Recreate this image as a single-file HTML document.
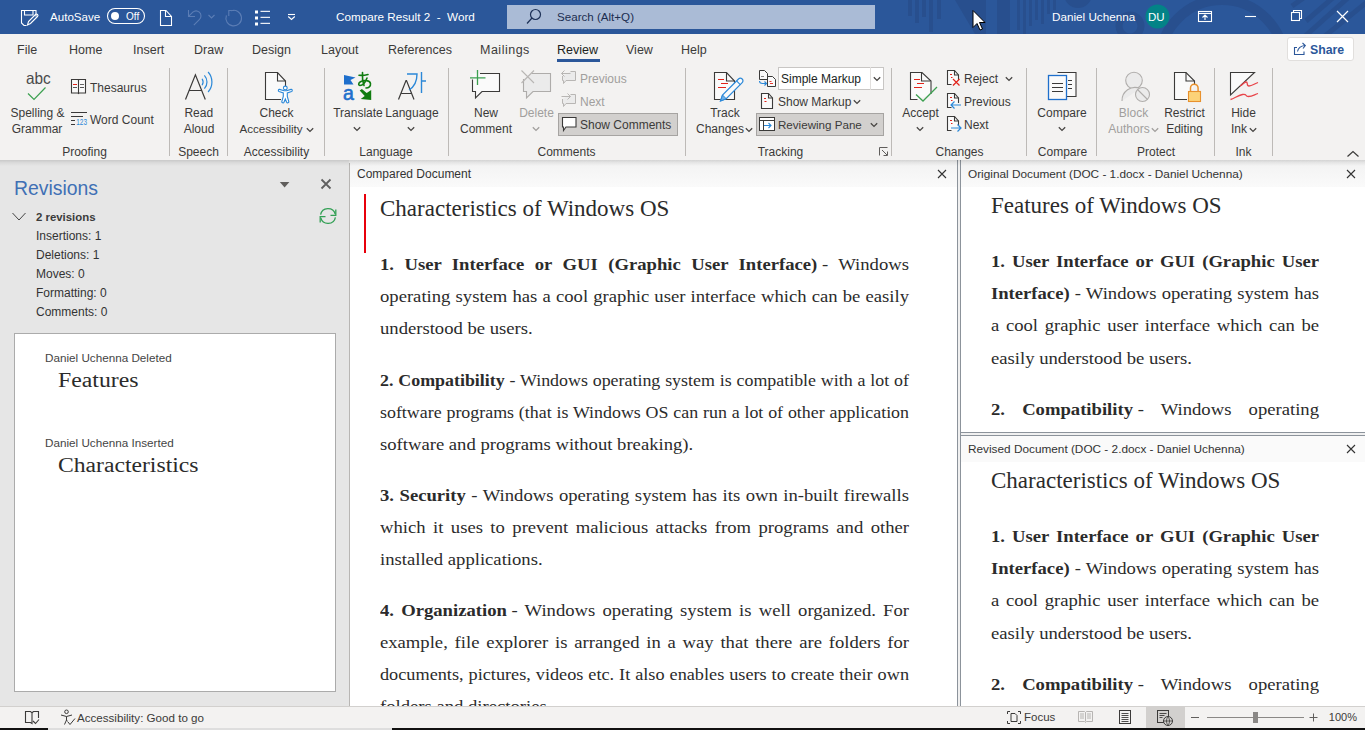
<!DOCTYPE html>
<html><head><meta charset="utf-8">
<style>
*{margin:0;padding:0;box-sizing:border-box}
html,body{width:1365px;height:730px;overflow:hidden;background:#f3f2f1;font-family:"Liberation Sans",sans-serif;color:#323130}
.a{position:absolute}
.t{position:absolute;white-space:nowrap;font-size:12px;line-height:14px}
#title{left:0;top:0;width:1365px;height:34px;background:#2b579a;overflow:hidden}
#title .t{color:#fff}
#tabs .t{font-size:12.5px;color:#3b3a39;top:43px}
.sep{position:absolute;width:1px;background:#c8c6c4;top:68px;height:88px}
.rb .t{color:#3b3a39}
.gl{position:absolute;white-space:nowrap;font-size:12px;line-height:14px;top:145px;color:#3b3a39}
.dis{color:#a19f9d !important}
#pane{left:0;top:161px;width:349px;height:545px;background:#e6e6e6}
.serif{font-family:"Liberation Serif",serif}
.doc{position:absolute;background:#fff;overflow:hidden}
.ln{position:absolute;white-space:nowrap;font-family:"Liberation Serif",serif;font-size:18px;line-height:20px;color:#2b2b2b;text-align:justify;text-align-last:justify}
.ln.l{text-align-last:left}
b{font-weight:bold}
</style>
</head><body>
<!-- TITLE BAR -->
<div id="title" class="a">
 <svg class="a" style="left:0;top:0" width="1365" height="34">
  <g fill="#284f8e">
   <rect x="908" y="0" width="4" height="16"/><rect x="915" y="0" width="4" height="23"/><rect x="922" y="0" width="4" height="17"/><rect x="929" y="0" width="4" height="32"/><rect x="937" y="0" width="4" height="19"/>
   <polygon points="955,0 986,0 978,34 975,34"/>
   <rect x="975" y="0" width="11" height="34"/>
   <rect x="997" y="0" width="13" height="34"/>
   <rect x="1017" y="0" width="3" height="30"/><rect x="1023" y="0" width="3" height="34"/><rect x="1029" y="0" width="3" height="26"/><rect x="1035" y="0" width="3" height="20"/><rect x="1041" y="0" width="3" height="24"/><rect x="1047" y="0" width="3" height="14"/><rect x="1053" y="0" width="3" height="10"/>
   <circle cx="1078" cy="-6" r="14"/>
  </g>
  <g fill="none" stroke="#284f8e">
   <circle cx="1130" cy="26" r="11" stroke-width="7"/>
   <circle cx="1222" cy="62" r="62" stroke-width="10"/>
  </g>
  <g stroke="#284f8e" stroke-width="5" stroke-linecap="butt">
   <path d="M1312 -8L1292 6"/><path d="M1335 -4L1306 21"/><path d="M1350 -4L1303 38"/><path d="M1372 -2L1320 40"/>
  </g>
  <!-- save icon -->
  <g fill="none" stroke="#fff" stroke-width="1.1">
   <path d="M26.5 25.5h-2.5l-2.5-2.5v-12.5h14.5v6"/>
   <path d="M24.5 10.5v4.5h8.5v-4.5"/>
   <path d="M27.5 25l1-3.5 7-7a1.3 1.3 0 0 1 2 2l-7 7z"/>
  </g>
  <!-- toggle -->
  <rect x="107.5" y="8.5" width="37" height="15" rx="7.5" fill="none" stroke="#fff" stroke-width="1.1"/>
  <circle cx="115" cy="16" r="4" fill="#fff"/>
  <!-- new doc icon -->
  <path d="M160.5 10.5h5.5l5.5 6v9h-11z M165.5 10.5v6h6" fill="none" stroke="#fff" stroke-width="1.1"/>
  <!-- undo (disabled) -->
  <g fill="none" stroke="#5b7db5" stroke-width="1.1">
   <path d="M188.5 10v6.5h6.5"/><path d="M188.8 16.2l4-4a5 5 0 0 1 6.5 0a5 5 0 0 1 0 7.5l-5.5 5.5"/>
   <path d="M208.5 15l3 3 3-3"/>
   <path d="M228.8 10v6M228.8 10.5h5.5"/><path d="M231 10.8a7.8 7.8 0 1 1 -4.6 4.6"/>
  </g>
  <!-- list -->
  <g fill="#fff"><rect x="255" y="10.5" width="3" height="3"/><rect x="255" y="16.5" width="3" height="3"/><rect x="255" y="22.5" width="3" height="3"/>
   <rect x="260.5" y="10.8" width="9.5" height="1.1"/><rect x="260.5" y="16.8" width="9.5" height="1.1"/><rect x="260.5" y="22.8" width="9.5" height="1.1"/></g>
  <g fill="none" stroke="#fff" stroke-width="1.1"><path d="M288 14.5h7"/><path d="M288.2 16.5l3.3 3 3.3-3"/></g>
  <!-- search box -->
  <rect x="507" y="5" width="368" height="24" fill="#aabbd6"/>
  <g fill="none" stroke="#1d3157" stroke-width="1.2"><circle cx="535.5" cy="14.5" r="5"/><path d="M532 18l-5 5.5"/></g>
  <!-- avatar -->
  <circle cx="1157.5" cy="16.5" r="12" fill="#038387"/>
  <!-- ribbon display -->
  <g fill="none" stroke="#fff" stroke-width="1.1"><rect x="1198.5" y="11.5" width="13" height="10"/><path d="M1198.5 13.5h13"/><path d="M1205 20v-5m-2.5 2.5l2.5-2.5 2.5 2.5"/></g>
  <path d="M1245 16.5h11" stroke="#fff" stroke-width="1.1"/>
  <g fill="none" stroke="#fff" stroke-width="1.1"><rect x="1291.5" y="12.5" width="8" height="8"/><path d="M1293.5 12.5v-2h8v8h-2"/></g>
  <path d="M1337 11l11 11M1348 11l-11 11" stroke="#fff" stroke-width="1.2"/>
  <!-- cursor -->
  <path d="M973 10.5v17l4-4 3 6.5 2.5-1-3-6.5h5.5z" fill="#fff" stroke="#000" stroke-width="1"/>
 </svg>
 <div class="t" style="left:50px;top:10px;font-size:11.6px">AutoSave</div>
 <div class="t" style="left:126px;top:10.5px;font-size:10px;line-height:12px">Off</div>
 <div class="t" style="left:336px;top:10px;font-size:11.7px">Compare Result 2&nbsp; -&nbsp; Word</div>
 <div class="t" style="left:557px;top:10px;font-size:11.6px;color:#1b2d50">Search (Alt+Q)</div>
 <div class="t" style="left:1052px;top:10px;font-size:11.7px">Daniel Uchenna</div>
 <div class="t" style="left:1148px;top:10px;font-size:11.5px">DU</div>
</div>


<!-- TABS -->
<div id="tabs">
 <div class="t" style="left:17px">File</div>
 <div class="t" style="left:69px">Home</div>
 <div class="t" style="left:133px">Insert</div>
 <div class="t" style="left:194px">Draw</div>
 <div class="t" style="left:252px">Design</div>
 <div class="t" style="left:321px">Layout</div>
 <div class="t" style="left:388px">References</div>
 <div class="t" style="left:480px;letter-spacing:0.5px">Mailings</div>
 <div class="t" style="left:557px;color:#201f1e">Review</div>
 <div class="a" style="left:557px;top:59px;width:43px;height:3px;background:#2b579a"></div>
 <div class="t" style="left:626px">View</div>
 <div class="t" style="left:681px">Help</div>
 <div class="a" style="left:1287px;top:37px;width:67px;height:24px;background:#fff;border:1px solid #e1dfdd;border-radius:3px"></div>
 <svg class="a" style="left:1293px;top:41px" width="16" height="16"><g fill="none" stroke="#2b579a" stroke-width="1.1"><path d="M4 6.5h-2.5v7h9.5v-3"/><path d="M4.5 10.5c0.5-3 3-5.5 7.5-6"/><path d="M9.5 2l2.8 2.5-2.3 3"/></g></svg>
 <div class="t" style="left:1310px;top:43px;color:#2b579a;font-size:12.3px;font-weight:bold">Share</div>
</div>


<!-- RIBBON -->
<div class="a" style="left:169px;top:68px;width:1px;height:88px;background:#bdbab7"></div>
<div class="a" style="left:227px;top:68px;width:1px;height:88px;background:#bdbab7"></div>
<div class="a" style="left:324px;top:68px;width:1px;height:88px;background:#bdbab7"></div>
<div class="a" style="left:448px;top:68px;width:1px;height:88px;background:#bdbab7"></div>
<div class="a" style="left:685px;top:68px;width:1px;height:88px;background:#bdbab7"></div>
<div class="a" style="left:891px;top:68px;width:1px;height:88px;background:#bdbab7"></div>
<div class="a" style="left:1026px;top:68px;width:1px;height:88px;background:#bdbab7"></div>
<div class="a" style="left:1096px;top:68px;width:1px;height:88px;background:#bdbab7"></div>
<div class="a" style="left:1214px;top:68px;width:1px;height:88px;background:#bdbab7"></div>
<div class="a" style="left:1272px;top:68px;width:1px;height:88px;background:#bdbab7"></div>
<div class="t" style="top:70.03px;font-size:16.5px;line-height:16.5px;color:#4a4a4a;left:26px;transform:scaleX(0.93);transform-origin:left">abc</div>
<svg class="a" style="left:26px;top:86px" width="22" height="16" viewBox="0 0 22 16"><path d="M2 7.5l6 6 11.5-12" fill="none" stroke="#3ca050" stroke-width="1.2"/></svg>
<div class="t" style="top:106.84px;font-size:12px;line-height:12px;color:#3b3a39;left:-112.5px;width:300px;text-align:center;">Spelling &amp;</div>
<div class="t" style="top:122.84px;font-size:12px;line-height:12px;color:#3b3a39;left:-113px;width:300px;text-align:center;">Grammar</div>
<svg class="a" style="left:70px;top:78px" width="18" height="17" viewBox="0 0 18 17"><path d="M1.5 1.5h6.5l0.5 0.5 0.5-0.5h6.5v13.5h-6.5l-0.5 0.5-0.5-0.5h-6.5z" fill="#fafafa" stroke="#3b3a39" stroke-width="1.1"/><path d="M8.5 2v13.5" stroke="#3b3a39" stroke-width="1.1"/><path d="M3 6.5h4" stroke="#e2231a" stroke-width="1"/><path d="M10 6.5h4" stroke="#666" stroke-width="1"/><path d="M3 9.5h4M10 9.5h4" stroke="#555" stroke-width="1"/></svg>
<div class="t" style="top:81.84px;font-size:12px;line-height:12px;color:#3b3a39;left:90px;">Thesaurus</div>
<svg class="a" style="left:70px;top:110px" width="18" height="16" viewBox="0 0 18 16"><path d="M1 2.5h16M1 6.5h12M1 10.5h4M1 14.5h4" stroke="#3b3a39" stroke-width="1.1"/><text x="6.3" y="15" font-size="8.8" fill="#2b88d8" font-family="Liberation Sans" textLength="10.7" lengthAdjust="spacingAndGlyphs">123</text></svg>
<div class="t" style="top:113.84px;font-size:12px;line-height:12px;color:#3b3a39;left:90px;">Word Count</div>
<div class="t" style="top:145.84px;font-size:12px;line-height:12px;color:#3b3a39;left:-65.5px;width:300px;text-align:center;">Proofing</div>
<svg class="a" style="left:184px;top:70px" width="32" height="32" viewBox="0 0 32 32"><path d="M1.5 29.5L11.4 4.8L21.3 29.5M5.3 20.5h12.3" fill="none" stroke="#3b3a39" stroke-width="1.2"/><g fill="none" stroke="#2b88d8" stroke-width="1.2"><path d="M18.1 8.8a6 6 0 0 1 0 6.4"/><path d="M20.4 5.3a10 10 0 0 1 0 13.4"/><path d="M24.1 2a15 15 0 0 1 0 20"/></g></svg>
<div class="t" style="top:106.84px;font-size:12px;line-height:12px;color:#3b3a39;left:48.80000000000001px;width:300px;text-align:center;">Read</div>
<div class="t" style="top:122.84px;font-size:12px;line-height:12px;color:#3b3a39;left:49px;width:300px;text-align:center;">Aloud</div>
<div class="t" style="top:145.84px;font-size:12px;line-height:12px;color:#3b3a39;left:48.5px;width:300px;text-align:center;">Speech</div>
<svg class="a" style="left:262px;top:70px" width="34" height="34" viewBox="0 0 34 34"><path d="M19 29.5h-15.5v-27h12l8 8.5v5" fill="#fafafa" stroke="#3b3a39" stroke-width="1.1"/><path d="M15.5 2.5v8.5h8" fill="none" stroke="#3b3a39" stroke-width="1.1"/><circle cx="23.3" cy="18" r="1.9" fill="#fff" stroke="#2b88d8" stroke-width="1.1"/><path d="M17 21.5l4.3 1.5v3.5l-1.5 5a1.2 1.2 0 0 0 2.2 0.8l1.3-3.3 1.3 3.3a1.2 1.2 0 0 0 2.2-0.8l-1.5-5v-3.5l4.3-1.5a1.1 1.1 0 0 0-0.6-2.1l-4.4 1.4h-2.6l-4.4-1.4a1.1 1.1 0 0 0-0.6 2.1z" fill="#fff" stroke="#2b88d8" stroke-width="1.1"/></svg>
<div class="t" style="top:106.84px;font-size:12px;line-height:12px;color:#3b3a39;left:126.5px;width:300px;text-align:center;">Check</div>
<div class="t" style="top:123.18px;font-size:11.6px;line-height:11.6px;color:#3b3a39;left:121px;width:300px;text-align:center;">Accessibility</div>
<svg class="a" style="left:306px;top:127px" width="8" height="6" viewBox="0 0 8 6"><path d="M0.8 1.2l3.2 3.2 3.2-3.2" fill="none" stroke="#484644" stroke-width="1.3"/></svg>
<div class="t" style="top:145.84px;font-size:12px;line-height:12px;color:#3b3a39;left:126.5px;width:300px;text-align:center;">Accessibility</div>
<svg class="a" style="left:338px;top:66px" width="36" height="38" viewBox="0 0 36 38"><path d="M6 9l11.5 2.5-5 2.5 3 4.6h-9.5z" fill="#1e6fcc"/><text x="5" y="34" font-size="19.5" fill="#1e6fcc" font-family="Liberation Sans" stroke="#1e6fcc" stroke-width="0.6">a</text><g transform="translate(19.5,5.5)" fill="none" stroke="#107c10" stroke-width="1.6" stroke-linecap="round"><path d="M1.5 3.8c3 0.3 6 0 9-0.8"/><path d="M5 1c-0.3 4 0 9 1.5 13"/><path d="M9.5 6.5c-1.5 4-4.5 7.5-7 7.5c-1.8 0-1.8-2.6 0.5-3.8c3.8-2 9.5-1.5 10 2c0.4 2.8-2 4-4.5 4.3"/></g><path d="M33.2 24v10l-10.5-1 4-3-5-5.5 2.2-1.5 4.8 4z" fill="#107c10"/></svg>
<div class="t" style="top:106.84px;font-size:12px;line-height:12px;color:#3b3a39;left:208px;width:300px;text-align:center;">Translate</div>
<svg class="a" style="left:353px;top:126px" width="8" height="6" viewBox="0 0 8 6"><path d="M0.8 1.2l3.2 3.2 3.2-3.2" fill="none" stroke="#484644" stroke-width="1.3"/></svg>
<svg class="a" style="left:395px;top:66px" width="34" height="36" viewBox="0 0 34 36"><path d="M3.5 33.5l7.5-19h0.5l7.5 19M6.5 27.5h10" fill="none" stroke="#3b3a39" stroke-width="1.2"/><g fill="none" stroke="#2b88d8" stroke-width="1.4"><path d="M12 8h10c0 8-3 13-8 16"/><path d="M26.5 6v21M26.5 15h4.5"/></g></svg>
<div class="t" style="top:106.84px;font-size:12px;line-height:12px;color:#3b3a39;left:262px;width:300px;text-align:center;">Language</div>
<svg class="a" style="left:407px;top:126px" width="8" height="6" viewBox="0 0 8 6"><path d="M0.8 1.2l3.2 3.2 3.2-3.2" fill="none" stroke="#484644" stroke-width="1.3"/></svg>
<div class="t" style="top:145.84px;font-size:12px;line-height:12px;color:#3b3a39;left:236px;width:300px;text-align:center;">Language</div>
<svg class="a" style="left:466px;top:68px" width="36" height="34" viewBox="0 0 36 34"><path d="M6.5 5.5h27v18h-17.5l-6.5 6.5v-6.5h-3z" fill="#fafafa"/><path d="M14 5.5h19.5v18h-17.5l-6.5 6.5v-6.5h-3v-12" fill="none" stroke="#3b3a39" stroke-width="1.1"/><path d="M11.5 2v15M4 9.8h15.5" stroke="#3ca050" stroke-width="1.3"/></svg>
<div class="t" style="top:106.84px;font-size:12px;line-height:12px;color:#3b3a39;left:336px;width:300px;text-align:center;">New</div>
<div class="t" style="top:122.84px;font-size:12px;line-height:12px;color:#3b3a39;left:336px;width:300px;text-align:center;">Comment</div>
<svg class="a" style="left:518px;top:68px" width="36" height="34" viewBox="0 0 36 34"><path d="M5.5 11v12.5h3v6.5l6.5-6.5h17.5v-18h-19" fill="#ebebeb" stroke="#aeacaa" stroke-width="1.1"/><path d="M3.5 2.5l12.5 12.5M16 2.5l-12.5 12.5" stroke="#b8b6b4" stroke-width="1.1"/></svg>
<div class="t" style="top:106.84px;font-size:12px;line-height:12px;color:#a19f9d;left:386.5px;width:300px;text-align:center;">Delete</div>
<svg class="a" style="left:532px;top:126px" width="8" height="6" viewBox="0 0 8 6"><path d="M0.8 1.2l3.2 3.2 3.2-3.2" fill="none" stroke="#a19f9d" stroke-width="1.3"/></svg>
<svg class="a" style="left:560px;top:68px" width="18" height="18" viewBox="0 0 18 18"><path d="M10.5 3.5h5v9h-9.5l-2.5 3v-3h-1v-4.5" fill="#ebebeb" stroke="#b8b6b4" stroke-width="1"/><path d="M1.5 5.5h9M4.5 2.5l-3 3 3 3" fill="none" stroke="#b8b6b4" stroke-width="1"/></svg>
<div class="t" style="top:72.84px;font-size:12px;line-height:12px;color:#a19f9d;left:580px;">Previous</div>
<svg class="a" style="left:560px;top:91px" width="18" height="18" viewBox="0 0 18 18"><path d="M10.5 3.5h5v9h-9.5l-2.5 3v-3h-1v-4.5" fill="#ebebeb" stroke="#b8b6b4" stroke-width="1"/><path d="M1.5 5.5h9M7.5 2.5l3 3-3 3" fill="none" stroke="#b8b6b4" stroke-width="1"/></svg>
<div class="t" style="top:95.84px;font-size:12px;line-height:12px;color:#a19f9d;left:580px;">Next</div>
<div class="a" style="left:558px;top:113px;width:120px;height:23px;background:#d2d0ce;border:1px solid #a6a4a2"></div>
<svg class="a" style="left:560px;top:115px" width="18" height="18" viewBox="0 0 18 18"><path d="M2.5 2.5h13.5v9.5h-10l-2.5 3.5v-3.5h-1z" fill="#fff" stroke="#3b3a39" stroke-width="1.1"/></svg>
<div class="t" style="top:118.84px;font-size:12px;line-height:12px;color:#3b3a39;left:580px;">Show Comments</div>
<div class="t" style="top:145.84px;font-size:12px;line-height:12px;color:#3b3a39;left:416.5px;width:300px;text-align:center;">Comments</div>
<svg class="a" style="left:710px;top:68px" width="36" height="36" viewBox="0 0 36 36"><path d="M4.5 4.5h12l8 8.5v18.5h-20z" fill="#fafafa" stroke="#3b3a39" stroke-width="1.1"/><path d="M16.5 4.5v8.5h8" fill="none" stroke="#3b3a39" stroke-width="1.1"/><path d="M8 11.5h6M11 15.5h7M8 19.5h8" stroke="#e2231a" stroke-width="1.1"/><path d="M10.5 33l2-6 16-16a2.6 2.6 0 0 1 3.7 3.7l-16 16z" fill="#fafafa" stroke="#2b88d8" stroke-width="1.2"/><path d="M10.5 33l2-6 3.7 3.7z" fill="#6fb0e8" stroke="#2b88d8" stroke-width="1"/><path d="M26.8 13.2l3.7 3.7" stroke="#2b88d8" stroke-width="1.1"/></svg>
<div class="t" style="top:106.84px;font-size:12px;line-height:12px;color:#3b3a39;left:575px;width:300px;text-align:center;">Track</div>
<div class="t" style="top:122.84px;font-size:12px;line-height:12px;color:#3b3a39;left:570px;width:300px;text-align:center;">Changes</div>
<svg class="a" style="left:745px;top:127px" width="8" height="6" viewBox="0 0 8 6"><path d="M0.8 1.2l3.2 3.2 3.2-3.2" fill="none" stroke="#484644" stroke-width="1.3"/></svg>
<svg class="a" style="left:757px;top:68px" width="20" height="20" viewBox="0 0 20 20"><path d="M2.5 2.5h5l3 3v6h-8z" fill="#fafafa" stroke="#3b3a39" stroke-width="1"/><path d="M4 8.5h3" stroke="#777" stroke-width="0.9"/><path d="M10.5 8.5h5l3 3v7h-8z" fill="#fafafa" stroke="#3b3a39" stroke-width="1"/><path d="M12.5 13.5h2M13 15.5h3" stroke="#e2231a" stroke-width="0.9"/><path d="M2.5 13c0 2 1 2.5 3 2.5h4M7.5 13.5l2 2-2 2" fill="none" stroke="#2b88d8" stroke-width="1.1"/></svg>
<div class="a" style="left:778px;top:67px;width:106px;height:23px;background:#fff;border:1px solid #c8c6c4"></div>
<div class="a" style="left:870px;top:67px;width:1px;height:23px;background:#e1dfdd"></div>
<div class="t" style="top:72.84px;font-size:12px;line-height:12px;color:#201f1e;left:781px;">Simple Markup</div>
<svg class="a" style="left:873px;top:76px" width="8" height="6" viewBox="0 0 8 6"><path d="M0.8 1.2l3.2 3.2 3.2-3.2" fill="none" stroke="#484644" stroke-width="1.3"/></svg>
<svg class="a" style="left:758px;top:91px" width="18" height="20" viewBox="0 0 18 20"><path d="M3.5 2.5h7l4 4.5v10.5h-11z" fill="#fafafa" stroke="#3b3a39" stroke-width="1.1"/><path d="M10.5 2.5v4.5h4" fill="none" stroke="#3b3a39" stroke-width="1.1"/><path d="M6 7.5h2M6.5 10.5h2" stroke="#e2231a" stroke-width="1"/></svg>
<div class="t" style="top:95.84px;font-size:12px;line-height:12px;color:#3b3a39;left:778px;">Show Markup</div>
<svg class="a" style="left:853px;top:99px" width="8" height="6" viewBox="0 0 8 6"><path d="M0.8 1.2l3.2 3.2 3.2-3.2" fill="none" stroke="#484644" stroke-width="1.3"/></svg>
<div class="a" style="left:756px;top:113px;width:128px;height:23px;background:#d2d0ce;border:1px solid #a6a4a2"></div>
<svg class="a" style="left:758px;top:115px" width="18" height="18" viewBox="0 0 18 18"><rect x="1.5" y="2.5" width="15" height="13" fill="#fff" stroke="#3b3a39" stroke-width="1"/><path d="M1.5 5.5h15M5.5 5.5v10" stroke="#3b3a39" stroke-width="1"/><path d="M6 10.5h7M10.5 8l2.5 2.5-2.5 2.5" fill="none" stroke="#2b88d8" stroke-width="1.1"/></svg>
<div class="t" style="top:119.18px;font-size:11.6px;line-height:11.6px;color:#3b3a39;left:778px;">Reviewing Pane</div>
<svg class="a" style="left:870px;top:122px" width="8" height="6" viewBox="0 0 8 6"><path d="M0.8 1.2l3.2 3.2 3.2-3.2" fill="none" stroke="#484644" stroke-width="1.3"/></svg>
<div class="t" style="top:145.84px;font-size:12px;line-height:12px;color:#3b3a39;left:630.5px;width:300px;text-align:center;">Tracking</div>
<svg class="a" style="left:879px;top:147px" width="10" height="10" viewBox="0 0 10 10"><path d="M0.5 8.5v-8h8" fill="none" stroke="#605e5c" stroke-width="1"/><path d="M3 3l5 5M8.5 4.5v4h-4" fill="none" stroke="#605e5c" stroke-width="1"/></svg>
<svg class="a" style="left:906px;top:68px" width="36" height="36" viewBox="0 0 36 36"><path d="M11.5 31.5h-7v-27h11.5l9 8.5v13" fill="#fafafa" stroke="#3b3a39" stroke-width="1.1"/><path d="M15.5 4.5v8.5h9" fill="none" stroke="#3b3a39" stroke-width="1.1"/><path d="M8 11.5h6M11 15.5h7M8 19.5h8" stroke="#e2231a" stroke-width="1.1"/><path d="M10 26.5l7 6.5 14-14" fill="none" stroke="#3ca050" stroke-width="1.3"/></svg>
<div class="t" style="top:106.84px;font-size:12px;line-height:12px;color:#3b3a39;left:770.5px;width:300px;text-align:center;">Accept</div>
<svg class="a" style="left:916px;top:126px" width="8" height="6" viewBox="0 0 8 6"><path d="M0.8 1.2l3.2 3.2 3.2-3.2" fill="none" stroke="#484644" stroke-width="1.3"/></svg>
<svg class="a" style="left:945px;top:69px" width="18" height="18" viewBox="0 0 18 18"><path d="M6.5 15.5h-4v-14h7l4 4.5v5" fill="#fafafa" stroke="#3b3a39" stroke-width="1.1"/><path d="M9.5 1.5v4.5h4" fill="none" stroke="#3b3a39" stroke-width="1.1"/><path d="M5 5.5h2M6 8.5h1.5" stroke="#e2231a" stroke-width="1"/><path d="M8 10l6.5 6.5M14.5 10l-6.5 6.5" stroke="#e2231a" stroke-width="1.2"/></svg>
<div class="t" style="top:72.84px;font-size:12px;line-height:12px;color:#3b3a39;left:964px;">Reject</div>
<svg class="a" style="left:1005px;top:76px" width="8" height="6" viewBox="0 0 8 6"><path d="M0.8 1.2l3.2 3.2 3.2-3.2" fill="none" stroke="#484644" stroke-width="1.3"/></svg>
<svg class="a" style="left:945px;top:92px" width="18" height="18" viewBox="0 0 18 18"><path d="M6.5 15.5h-4v-14h7l4 4.5v5" fill="#fafafa" stroke="#3b3a39" stroke-width="1.1"/><path d="M9.5 1.5v4.5h4" fill="none" stroke="#3b3a39" stroke-width="1.1"/><path d="M5 5.5h2M6 8.5h1.5" stroke="#e2231a" stroke-width="1"/><path d="M6 13h10M9.5 9.5l-3.5 3.5 3.5 3.5" fill="none" stroke="#2b88d8" stroke-width="1.2"/></svg>
<div class="t" style="top:95.84px;font-size:12px;line-height:12px;color:#3b3a39;left:964px;">Previous</div>
<svg class="a" style="left:945px;top:115px" width="18" height="18" viewBox="0 0 18 18"><path d="M6.5 15.5h-4v-14h7l4 4.5v5" fill="#fafafa" stroke="#3b3a39" stroke-width="1.1"/><path d="M9.5 1.5v4.5h4" fill="none" stroke="#3b3a39" stroke-width="1.1"/><path d="M5 5.5h2M6 8.5h1.5" stroke="#e2231a" stroke-width="1"/><path d="M6 13h10M12.5 9.5l3.5 3.5-3.5 3.5" fill="none" stroke="#2b88d8" stroke-width="1.2"/></svg>
<div class="t" style="top:118.84px;font-size:12px;line-height:12px;color:#3b3a39;left:964px;">Next</div>
<div class="t" style="top:145.84px;font-size:12px;line-height:12px;color:#3b3a39;left:809.5px;width:300px;text-align:center;">Changes</div>
<svg class="a" style="left:1046px;top:70px" width="32" height="32" viewBox="0 0 32 32"><path d="M11.5 2.5h18.5v24h-12" fill="#fafafa" stroke="#3b3a39" stroke-width="1.1"/><path d="M22 10.5h4M22 14.5h4M22 18.5h4" stroke="#3b3a39" stroke-width="1"/><rect x="2.5" y="5.5" width="18" height="24" fill="#fafafa" stroke="#1e6fcc" stroke-width="1.3"/><path d="M6 13.5h11M6 17.5h11M6 21.5h11" stroke="#3b3a39" stroke-width="1"/></svg>
<div class="t" style="top:106.84px;font-size:12px;line-height:12px;color:#3b3a39;left:912px;width:300px;text-align:center;">Compare</div>
<svg class="a" style="left:1058px;top:126px" width="8" height="6" viewBox="0 0 8 6"><path d="M0.8 1.2l3.2 3.2 3.2-3.2" fill="none" stroke="#484644" stroke-width="1.3"/></svg>
<div class="t" style="top:145.84px;font-size:12px;line-height:12px;color:#3b3a39;left:912.5px;width:300px;text-align:center;">Compare</div>
<svg class="a" style="left:1118px;top:70px" width="34" height="34" viewBox="0 0 34 34"><g fill="#ebebeb" stroke="#b0aeac" stroke-width="1.1"><circle cx="16" cy="10.5" r="8.3"/><path d="M4 31a13 13 0 0 1 18-12.5"/><circle cx="24.5" cy="24.5" r="7"/><path d="M19.5 19.5l10 10"/></g></svg>
<div class="t" style="top:106.84px;font-size:12px;line-height:12px;color:#a19f9d;left:983.5px;width:300px;text-align:center;">Block</div>
<div class="t" style="top:122.84px;font-size:12px;line-height:12px;color:#a19f9d;left:979px;width:300px;text-align:center;">Authors</div>
<svg class="a" style="left:1151px;top:127px" width="8" height="6" viewBox="0 0 8 6"><path d="M0.8 1.2l3.2 3.2 3.2-3.2" fill="none" stroke="#a19f9d" stroke-width="1.3"/></svg>
<svg class="a" style="left:1171px;top:70px" width="34" height="34" viewBox="0 0 34 34"><path d="M16 29.5h-12.5v-27h11.5l8.5 8.5v3" fill="#fafafa" stroke="#3b3a39" stroke-width="1.1"/><path d="M15 2.5v8.5h8.5" fill="none" stroke="#3b3a39" stroke-width="1.1"/><path d="M19.5 21.5v-3.5a3.8 3.8 0 0 1 7.6 0v3.5" fill="none" stroke="#e8912d" stroke-width="1.5"/><rect x="17.5" y="21.5" width="12" height="10" fill="#fcd278" stroke="#e8912d" stroke-width="1.1"/></svg>
<div class="t" style="top:106.84px;font-size:12px;line-height:12px;color:#3b3a39;left:1034.5px;width:300px;text-align:center;">Restrict</div>
<div class="t" style="top:122.84px;font-size:12px;line-height:12px;color:#3b3a39;left:1034.5px;width:300px;text-align:center;">Editing</div>
<div class="t" style="top:145.84px;font-size:12px;line-height:12px;color:#3b3a39;left:1006px;width:300px;text-align:center;">Protect</div>
<svg class="a" style="left:1228px;top:70px" width="32" height="32" viewBox="0 0 32 32"><path d="M2.5 2.5h24l-24 22.5z" fill="#fafafa" stroke="#3b3a39" stroke-width="1.1"/><path d="M12 16c3-1 3.5-4 6-4s0 4 3 4 5-2 9-3.5M2.5 29.5c4-1 7-4 12-5s2 2 6 2 6-2 9.5-3" fill="none" stroke="#e8454a" stroke-width="1.3"/></svg>
<div class="t" style="top:106.84px;font-size:12px;line-height:12px;color:#3b3a39;left:1093.5px;width:300px;text-align:center;">Hide</div>
<div class="t" style="top:122.84px;font-size:12px;line-height:12px;color:#3b3a39;left:1089px;width:300px;text-align:center;">Ink</div>
<svg class="a" style="left:1249px;top:127px" width="8" height="6" viewBox="0 0 8 6"><path d="M0.8 1.2l3.2 3.2 3.2-3.2" fill="none" stroke="#484644" stroke-width="1.3"/></svg>
<div class="t" style="top:145.84px;font-size:12px;line-height:12px;color:#3b3a39;left:1093.5px;width:300px;text-align:center;">Ink</div>
<svg class="a" style="left:1346px;top:149px" width="14" height="10" viewBox="0 0 14 10"><path d="M1.5 7.5l5.5-5 5.5 5" fill="none" stroke="#3b3a39" stroke-width="1.2"/></svg>
<div class="a" style="left:0px;top:160px;width:349px;height:546px;background:#e6e6e6"></div>
<div class="a" style="left:349px;top:163px;width:1px;height:543px;background:#b8b6b4"></div>
<div class="t" style="top:178.58px;font-size:19.4px;line-height:19.4px;color:#4070b5;left:14px;">Revisions</div>
<svg class="a" style="left:279px;top:181px" width="12" height="8" viewBox="0 0 12 8"><path d="M0.8 1h9.6l-4.8 5.5z" fill="#605e5c"/></svg>
<svg class="a" style="left:319px;top:177px" width="14" height="14" viewBox="0 0 14 14"><path d="M2.5 2.5l9 9M11.5 2.5l-9 9" stroke="#5f5f5f" stroke-width="1.8"/></svg>
<svg class="a" style="left:11px;top:211px" width="16" height="12" viewBox="0 0 16 12"><path d="M1.5 2l6.5 7 6.5-7" fill="none" stroke="#444" stroke-width="1"/></svg>
<div class="t" style="top:211.65px;font-size:11.4px;line-height:11.4px;color:#3b3b3b;font-weight:bold;left:36px;">2 revisions</div>
<svg class="a" style="left:318px;top:206px" width="20" height="20" viewBox="0 0 20 20"><g fill="none" stroke="#33a055" stroke-width="1.3"><path d="M2.6 8.7a7.5 7.5 0 0 1 14.6-0.6"/><path d="M17.4 11.3a7.5 7.5 0 0 1-14.6 0.6"/><path d="M17.8 3.5v5.8h-5.3"/><path d="M2.2 16.5v-5.8h5.3"/></g></svg>
<div class="t" style="top:229.84px;font-size:12px;line-height:12px;color:#333;left:36px;">Insertions: 1</div>
<div class="t" style="top:248.84px;font-size:12px;line-height:12px;color:#333;left:36px;">Deletions: 1</div>
<div class="t" style="top:267.84px;font-size:12px;line-height:12px;color:#333;left:36px;">Moves: 0</div>
<div class="t" style="top:286.84px;font-size:12px;line-height:12px;color:#333;left:36px;">Formatting: 0</div>
<div class="t" style="top:305.84px;font-size:12px;line-height:12px;color:#333;left:36px;">Comments: 0</div>
<div class="a" style="left:14px;top:333px;width:322px;height:359px;background:#fff;border:1px solid #ababab"></div>
<div class="t" style="top:352.10px;font-size:11.7px;line-height:11.7px;color:#444;left:45px;">Daniel Uchenna Deleted</div>
<div class="t" style="top:370.16px;font-size:21.3px;line-height:21.3px;color:#2b2b2b;font-family:'Liberation Serif',serif;left:57.5px;transform:scaleX(1.115);transform-origin:0 0">Features</div>
<div class="t" style="top:437.10px;font-size:11.7px;line-height:11.7px;color:#444;left:45px;">Daniel Uchenna Inserted</div>
<div class="t" style="top:454.66px;font-size:21.3px;line-height:21.3px;color:#2b2b2b;font-family:'Liberation Serif',serif;left:57.5px;transform:scaleX(1.11);transform-origin:0 0">Characteristics</div>
<div class="a" style="left:350px;top:160px;width:607px;height:546px;background:#fff"></div>
<div class="a" style="left:350px;top:160px;width:607px;height:27px;background:linear-gradient(#f2f2f2,#fafafa)"></div>
<div class="t" style="top:168.34px;font-size:12px;line-height:12px;color:#333;left:357px;">Compared Document</div>
<svg class="a" style="left:937px;top:169px" width="10" height="10" viewBox="0 0 10 10"><path d="M1 1l8 8M9 1l-8 8" stroke="#333" stroke-width="1.1"/></svg>
<div class="a" style="left:957px;top:160px;width:1px;height:546px;background:#8c939b"></div>
<div class="a" style="left:958px;top:160px;width:2px;height:546px;background:#f0f0f0"></div>
<div class="a" style="left:960px;top:160px;width:1px;height:546px;background:#8c939b"></div>
<div class="a" style="left:961px;top:160px;width:404px;height:272px;background:#fff"></div>
<div class="a" style="left:961px;top:160px;width:404px;height:27px;background:linear-gradient(#f2f2f2,#fafafa)"></div>
<div class="t" style="top:168.51px;font-size:11.8px;line-height:11.8px;color:#333;left:968px;">Original Document (DOC - 1.docx - Daniel Uchenna)</div>
<svg class="a" style="left:1346px;top:169px" width="10" height="10" viewBox="0 0 10 10"><path d="M1 1l8 8M9 1l-8 8" stroke="#333" stroke-width="1.1"/></svg>
<div class="a" style="left:961px;top:432px;width:404px;height:1px;background:#8c939b"></div>
<div class="a" style="left:961px;top:433px;width:404px;height:2px;background:#f0f0f0"></div>
<div class="a" style="left:961px;top:435px;width:404px;height:1px;background:#8c939b"></div>
<div class="a" style="left:961px;top:436px;width:404px;height:270px;background:#fff"></div>
<div class="a" style="left:961px;top:436px;width:404px;height:26px;background:#fafafa"></div>
<div class="t" style="top:443.51px;font-size:11.8px;line-height:11.8px;color:#333;left:968px;">Revised Document (DOC - 2.docx - Daniel Uchenna)</div>
<svg class="a" style="left:1346px;top:444px" width="10" height="10" viewBox="0 0 10 10"><path d="M1 1l8 8M9 1l-8 8" stroke="#333" stroke-width="1.1"/></svg>
<div class="a" style="left:350px;top:186px;width:607px;height:520px;overflow:hidden">
<div class="a" style="left:14px;top:8px;width:2px;height:59px;background:#e8000b"></div>
<div class="t" style="top:10.94px;font-size:23px;line-height:23px;color:#2b2b2b;font-family:'Liberation Serif',serif;left:30px;">Characteristics of Windows OS</div>
<div class="ln" style="left:30px;top:70.80px;width:454.077px;font-size:16px;line-height:16px;transform:scaleX(1.1650);transform-origin:0 0"><b>1. User Interface or GUI (Graphic User </b><span style="display:inline-block"><b>Interface)</b> -</span> Windows</div>
<div class="ln" style="left:30px;top:103.10px;width:454.077px;font-size:16px;line-height:16px;transform:scaleX(1.1650);transform-origin:0 0">operating system has a cool graphic user interface which can be easily</div>
<div class="ln l" style="left:30px;top:135.20px;width:454.077px;font-size:16px;line-height:16px;transform:scaleX(1.1650);transform-origin:0 0">understood be users.</div>
<div class="ln" style="left:30px;top:186.60px;width:473.019px;font-size:16px;line-height:16px;transform:scaleX(1.1183);transform-origin:0 0"><b>2. Compatibility</b> - Windows operating system is compatible with a lot of</div>
<div class="ln" style="left:30px;top:218.60px;width:472.956px;font-size:16px;line-height:16px;transform:scaleX(1.1185);transform-origin:0 0">software programs (that is Windows OS can run a lot of other application</div>
<div class="ln l" style="left:30px;top:251.00px;width:454.077px;font-size:16px;line-height:16px;transform:scaleX(1.1650);transform-origin:0 0">software and programs without breaking).</div>
<div class="ln" style="left:30px;top:301.60px;width:454.077px;font-size:16px;line-height:16px;transform:scaleX(1.1650);transform-origin:0 0"><b>3. Security</b> - Windows operating system has its own in-built firewalls</div>
<div class="ln" style="left:30px;top:333.60px;width:454.077px;font-size:16px;line-height:16px;transform:scaleX(1.1650);transform-origin:0 0">which it uses to prevent malicious attacks from programs and other</div>
<div class="ln l" style="left:30px;top:366.10px;width:454.077px;font-size:16px;line-height:16px;transform:scaleX(1.1650);transform-origin:0 0">installed applications.</div>
<div class="ln" style="left:30px;top:416.60px;width:454.077px;font-size:16px;line-height:16px;transform:scaleX(1.1650);transform-origin:0 0"><b>4. </b><span style="display:inline-block"><b>Organization</b> -</span> Windows operating system is well organized. For</div>
<div class="ln" style="left:30px;top:448.60px;width:454.077px;font-size:16px;line-height:16px;transform:scaleX(1.1650);transform-origin:0 0">example, file explorer is arranged in a way that there are folders for</div>
<div class="ln" style="left:30px;top:480.60px;width:464.009px;font-size:16px;line-height:16px;transform:scaleX(1.1401);transform-origin:0 0">documents, pictures, videos etc. It also enables users to create their own</div>
<div class="ln l" style="left:30px;top:513.10px;width:454.077px;font-size:16px;line-height:16px;transform:scaleX(1.1650);transform-origin:0 0">folders and directories.</div>
</div>
<div class="a" style="left:961px;top:186px;width:404px;height:246px;overflow:hidden">
<div class="t" style="top:7.74px;font-size:23px;line-height:23px;color:#2b2b2b;font-family:'Liberation Serif',serif;left:30px;">Features of Windows OS</div>
<div class="ln" style="left:30px;top:68.00px;width:281.545px;font-size:16px;line-height:16px;transform:scaleX(1.1650);transform-origin:0 0"><b>1. User Interface or GUI (Graphic User</b></div>
<div class="ln" style="left:30px;top:100.20px;width:281.691px;font-size:16px;line-height:16px;transform:scaleX(1.1644);transform-origin:0 0"><b>Interface)</b> - Windows operating system has</div>
<div class="ln" style="left:30px;top:132.40px;width:281.545px;font-size:16px;line-height:16px;transform:scaleX(1.1650);transform-origin:0 0">a cool graphic user interface which can be</div>
<div class="ln l" style="left:30px;top:164.60px;width:281.545px;font-size:16px;line-height:16px;transform:scaleX(1.1650);transform-origin:0 0">easily understood be users.</div>
<div class="ln" style="left:30px;top:215.60px;width:281.545px;font-size:16px;line-height:16px;transform:scaleX(1.1650);transform-origin:0 0"><b>2. </b><span style="display:inline-block"><b>Compatibility</b> -</span> Windows operating</div>
<div class="ln" style="left:30px;top:247.80px;width:281.545px;font-size:16px;line-height:16px;transform:scaleX(1.1650);transform-origin:0 0">system is compatible with a lot of software</div>
</div>
<div class="a" style="left:961px;top:461px;width:404px;height:246px;overflow:hidden">
<div class="t" style="top:7.74px;font-size:23px;line-height:23px;color:#2b2b2b;font-family:'Liberation Serif',serif;left:30px;">Characteristics of Windows OS</div>
<div class="ln" style="left:30px;top:68.00px;width:281.545px;font-size:16px;line-height:16px;transform:scaleX(1.1650);transform-origin:0 0"><b>1. User Interface or GUI (Graphic User</b></div>
<div class="ln" style="left:30px;top:100.20px;width:281.691px;font-size:16px;line-height:16px;transform:scaleX(1.1644);transform-origin:0 0"><b>Interface)</b> - Windows operating system has</div>
<div class="ln" style="left:30px;top:132.40px;width:281.545px;font-size:16px;line-height:16px;transform:scaleX(1.1650);transform-origin:0 0">a cool graphic user interface which can be</div>
<div class="ln l" style="left:30px;top:164.60px;width:281.545px;font-size:16px;line-height:16px;transform:scaleX(1.1650);transform-origin:0 0">easily understood be users.</div>
<div class="ln" style="left:30px;top:215.60px;width:281.545px;font-size:16px;line-height:16px;transform:scaleX(1.1650);transform-origin:0 0"><b>2. </b><span style="display:inline-block"><b>Compatibility</b> -</span> Windows operating</div>
<div class="ln" style="left:30px;top:247.80px;width:281.545px;font-size:16px;line-height:16px;transform:scaleX(1.1650);transform-origin:0 0">system is compatible with a lot of software</div>
</div>
<div class="a" style="left:0px;top:160px;width:1365px;height:6px;background:linear-gradient(rgba(0,0,0,0.13),rgba(0,0,0,0.06) 40%,rgba(0,0,0,0))"></div>
<div class="a" style="left:0px;top:706px;width:1365px;height:1px;background:#d2d0ce"></div>
<div class="a" style="left:0px;top:707px;width:1365px;height:21px;background:#f3f2f1"></div>
<div class="a" style="left:0px;top:728px;width:48px;height:2px;background:#111"></div>
<div class="a" style="left:48px;top:728px;width:344px;height:2px;background:#dedede"></div>
<div class="a" style="left:392px;top:728px;width:973px;height:2px;background:#111"></div>
<svg class="a" style="left:23px;top:710px" width="18" height="16" viewBox="0 0 18 16"><g fill="none" stroke="#3b3a39" stroke-width="1.1"><path d="M2.5 1.5h5l1.5 1.2v10.8l-1.5-1h-5z"/><path d="M9 2.7l1.5-1.2h5v6.5"/><path d="M10 11l2.5 2.5 3.5-4"/></g></svg>
<svg class="a" style="left:59px;top:709px" width="18" height="17" viewBox="0 0 18 17"><g fill="none" stroke="#3b3a39" stroke-width="1"><circle cx="7.5" cy="2.8" r="1.8"/><path d="M2 6l5.5 1.5 5.5-1.5M7.5 7.5v3.5l-2 4.5M7.5 11l1 1.5"/><path d="M9 13l2 2.5 5-6"/></g></svg>
<div class="t" style="top:712.18px;font-size:11.6px;line-height:11.6px;color:#3b3a39;left:77px;">Accessibility: Good to go</div>
<svg class="a" style="left:1006px;top:710px" width="16" height="16" viewBox="0 0 16 16"><path d="M1.5 4v-2.5h2.5M12 1.5h2.5v2.5M1.5 11v2.5h2.5M12 13.5h2.5v-2.5" fill="none" stroke="#3b3a39" stroke-width="1"/><path d="M5 3.5h4l2 2v6h-6z" fill="none" stroke="#3b3a39" stroke-width="1"/></svg>
<div class="t" style="top:712.27px;font-size:11.5px;line-height:11.5px;color:#3b3a39;left:1024px;">Focus</div>
<svg class="a" style="left:1076px;top:709px" width="18" height="16" viewBox="0 0 18 16"><path d="M2.5 2.5h6l1 1 1-1h6v10h-6l-1 1-1-1h-6z M9.5 3.5v9 M4 5h4M4 7h4M4 9h4M11 5h4M11 7h4M11 9h4" fill="none" stroke="#b0aeac" stroke-width="0.9"/></svg>
<svg class="a" style="left:1116px;top:709px" width="18" height="16" viewBox="0 0 18 16"><rect x="3.5" y="1.5" width="11" height="13" fill="none" stroke="#3b3a39" stroke-width="1"/><path d="M5.5 4.5h7M5.5 6.5h7M5.5 8.5h7M5.5 10.5h7M5.5 12.5h7" stroke="#3b3a39" stroke-width="0.9"/></svg>
<div class="a" style="left:1146px;top:707px;width:39px;height:21px;background:#d2d0ce"></div>
<svg class="a" style="left:1155px;top:709px" width="20" height="17" viewBox="0 0 20 17"><rect x="2.5" y="1.5" width="11" height="12" fill="none" stroke="#3b3a39" stroke-width="1"/><path d="M4.5 4.5h7M4.5 6.5h5M4.5 8.5h3" stroke="#3b3a39" stroke-width="0.9"/><circle cx="13" cy="12" r="4.5" fill="#d2d0ce" stroke="#3b3a39" stroke-width="1"/><path d="M8.5 12h9M13 7.5c-2 3-2 6 0 9M13 7.5c2 3 2 6 0 9" fill="none" stroke="#3b3a39" stroke-width="0.8"/></svg>
<div class="a" style="left:1191px;top:717px;width:8px;height:1px;background:#605e5c"></div>
<div class="a" style="left:1207px;top:717px;width:97px;height:1px;background:#8a8886"></div>
<div class="a" style="left:1253px;top:712px;width:5px;height:11px;background:#8a8886"></div>
<svg class="a" style="left:1309px;top:712px" width="10" height="10" viewBox="0 0 10 10"><path d="M0.5 5.5h8M4.5 1.5v8" stroke="#605e5c" stroke-width="1"/></svg>
<div class="t" style="top:712.19px;font-size:11px;line-height:11px;color:#3b3a39;left:957px;width:400px;text-align:right;">100%</div>
</body></html>
